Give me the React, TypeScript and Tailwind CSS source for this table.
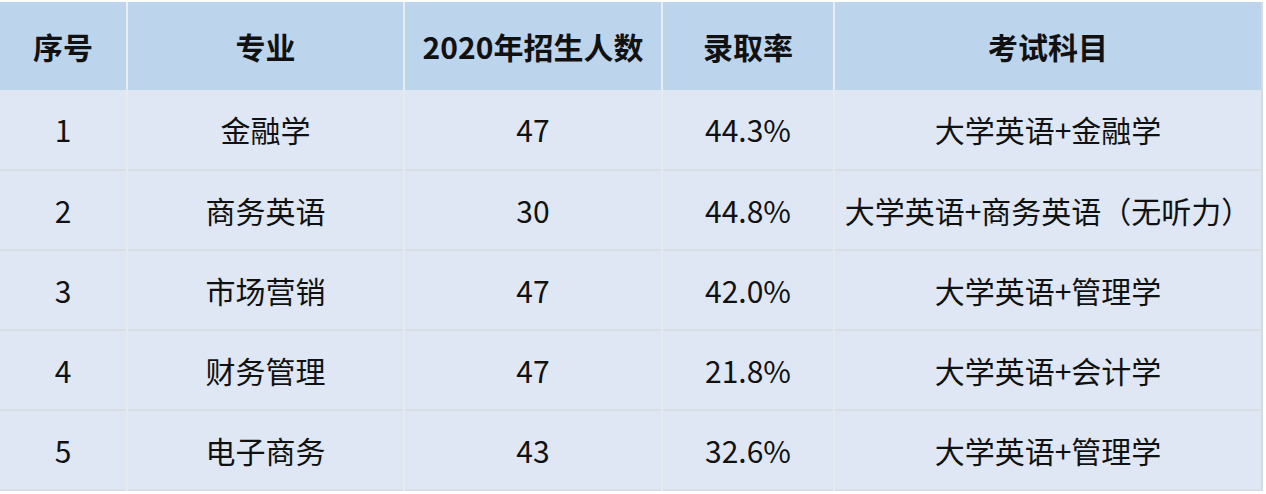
const headers = ["序号", "专业", "2020年招生人数", "录取率", "考试科目"];

const rows = [
  ["1", "金融学", "47", "44.3%", "大学英语+金融学"],
  ["2", "商务英语", "30", "44.8%", "大学英语+商务英语（无听力）"],
  ["3", "市场营销", "47", "42.0%", "大学英语+管理学"],
  ["4", "财务管理", "47", "21.8%", "大学英语+会计学"],
  ["5", "电子商务", "43", "32.6%", "大学英语+管理学"],
];

const widths = ["w-[127px]", "w-[277px]", "w-[258px]", "w-[172px]", "w-[428px]"];

export default function App() {
  return (
    <div className="w-[1266px] h-[494px] bg-white pt-[2px] font-['Microsoft_YaHei','Noto_Sans_CJK_SC',sans-serif] text-[#111]">
      <table className="border-collapse table-fixed w-[1263px] border-r-2 border-[#d6dbe2]">
        <thead>
          <tr className="h-[88px] bg-[#bdd4ed]">
            {headers.map((h, i) => (
              <th
                key={h}
                className={`${widths[i]} border-x-2 border-[#e9ecf0] first:border-l-0 last:border-r-[#d6dbe2] text-[30px] font-bold text-center whitespace-nowrap`}
              >
                {h}
              </th>
            ))}
          </tr>
        </thead>
        <tbody>
          {rows.map((r) => (
            <tr key={r[0]} className="h-[80px] bg-[#dee7f3] border-b-2 border-[#d9dee5]">
              {r.map((c, i) => (
                <td
                  key={i}
                  className="border-x-2 border-[#e6e9ee] first:border-l-0 last:border-r-[#d6dbe2] text-[30px] text-center whitespace-nowrap"
                >
                  {c}
                </td>
              ))}
            </tr>
          ))}
        </tbody>
      </table>
    </div>
  );
}
